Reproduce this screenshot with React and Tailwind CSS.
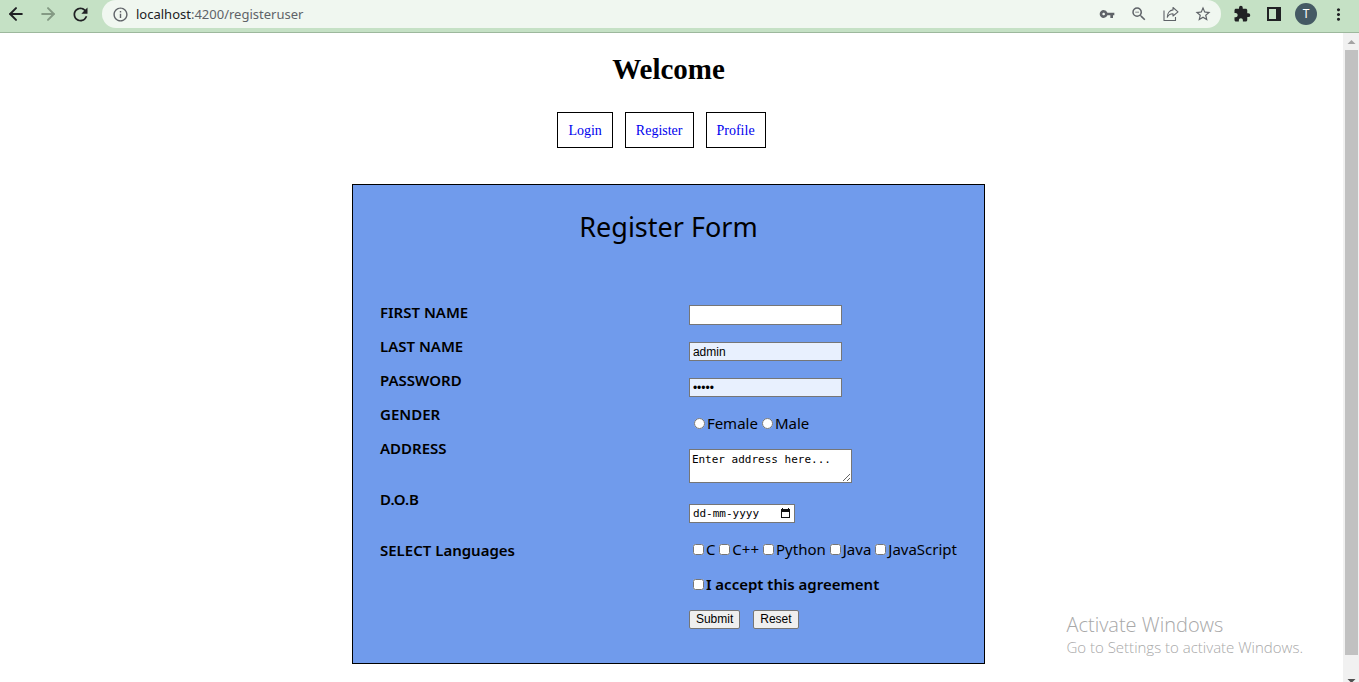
import { ArrowLeft, ArrowRight } from "lucide-react";
import { MdVpnKey, MdOutlineInfo, MdRefresh, MdStarBorder, MdExtension, MdZoomOut, MdMoreVert } from "react-icons/md";

const languages = ["C", "C++", "Python", "Java", "JavaScript"];

function ShareIcon() {
  return (
    <svg viewBox="0 0 16 16" className="size-4" fill="none" stroke="currentColor" strokeWidth="1.1" strokeLinejoin="round">
      <path d="M1 4.500v10h11.500v-3.500" />
      <path d="M10 1.500l5 4.300-5 4.200V7.800C7.200 7.800 5.300 9 4.300 11.200c0-3.800 2.200-6.900 5.700-7.300z" />
    </svg>
  );
}

function BrowserBar() {
  return (
    <header className="flex h-[33px] shrink-0 items-start border-b border-[#9db89d] bg-[#c5e1c5] pr-[11px] font-['Noto_Sans',sans-serif]">
      <div className="flex h-7 w-[102px] shrink-0 items-center gap-3 pl-1.5 text-[#202124]">
        <button aria-label="Back"><ArrowLeft size={20} strokeWidth={2.4} /></button>
        <button aria-label="Forward" className="text-[#849a84]"><ArrowRight size={20} strokeWidth={2.4} /></button>
        <button aria-label="Reload"><MdRefresh size={21} /></button>
      </div>
      <div className="flex h-7 flex-1 items-center rounded-full bg-[#f0f7f0] pr-[9px] pl-2.5 text-[#5f6368]">
        <MdOutlineInfo size={17} />
        <p className="flex-1 pt-0.5 pl-[7px] text-[13px]">
          <span className="text-[#202124]">localhost</span>:4200/registeruser
        </p>
        <div className="flex items-center gap-[15px]">
          <button aria-label="Passwords"><MdVpnKey size={16} /></button>
          <button aria-label="Zoom"><MdZoomOut size={18} /></button>
          <button aria-label="Share"><ShareIcon /></button>
          <button aria-label="Bookmark"><MdStarBorder size={18} /></button>
        </div>
      </div>
      <div className="flex h-7 shrink-0 items-center pl-3 text-[#202124]">
        <button aria-label="Extensions"><MdExtension size={18} /></button>
        <button aria-label="Side panel" className="ml-4">
          <svg viewBox="0 0 14 14" className="size-3.5"><path fill="currentColor" fillRule="evenodd" d="M0 0h14v14H0zM2 2v10h7V2z" /></svg>
        </button>
        <button aria-label="Account" className="ml-3.5 size-[22px] rounded-full bg-[#455a64] text-xs text-white">T</button>
        <button aria-label="Menu" className="ml-3"><MdMoreVert size={19} /></button>
      </div>
    </header>
  );
}

function Scrollbar() {
  return (
    <div className="flex w-4 shrink-0 flex-col items-center bg-[#f1f1f1]" aria-hidden="true">
      <svg viewBox="0 0 16 17" className="h-[17px] w-4 shrink-0"><path fill="#a3a3a3" d="M4.500 11h8L8.500 7z" /></svg>
      <div className="w-[13px] flex-1 bg-[#c1c1c1]" />
      <svg viewBox="0 0 16 27" className="h-[27px] w-4 shrink-0"><path fill="#505050" d="M4.500 24h8l-4 4z" /></svg>
    </div>
  );
}

const label = "text-[15px] leading-[17px] font-semibold";
const field = "w-[153px] border border-[#767676] px-[3px] font-['Liberation_Sans',sans-serif] text-xs leading-[17px] outline-none";
const tick = "size-[11px]";
const option = "flex items-center gap-0.5";
const action = "h-[19px] rounded-[2px] border border-[#767676] bg-[#efefef] px-1.5 font-['Liberation_Sans',sans-serif] text-xs leading-[17px]";

function RegisterForm() {
  return (
    <form
      className="mt-9 h-[480px] w-[633px] border border-black bg-[#709bec] px-[27px] pt-[22px] font-['Noto_Sans',sans-serif] text-black"
      onSubmit={(e) => e.preventDefault()}
    >
      <h2 className="text-center text-[27px] leading-10">Register Form</h2>
      <div className="mt-14 flex">
        <div className="flex w-[309px] flex-col items-start gap-[17px] pt-px">
          <label htmlFor="first" className={label}>FIRST NAME</label>
          <label htmlFor="last" className={label}>LAST NAME</label>
          <label htmlFor="pass" className={label}>PASSWORD</label>
          <span id="gender" className={label}>GENDER</span>
          <label htmlFor="address" className={label}>ADDRESS</label>
          <label htmlFor="dob" className={label + " mt-[17px]"}>D.O.B</label>
          <span id="langs" className={label + " mt-[17px]"}>SELECT Languages</span>
        </div>
        <div className="flex flex-col items-start pt-0.5">
          <input id="first" type="text" className={field + " h-5 bg-white"} />
          <input id="last" type="text" defaultValue="admin" className={field + " mt-[17px] h-[19px] bg-[#e8f0fe]"} />
          <input id="pass" type="password" defaultValue="admin" className={field + " mt-[17px] h-[19px] bg-[#e8f0fe]"} />
          <div role="radiogroup" aria-labelledby="gender" className="mt-4 flex gap-1 pl-[5px] text-[15px] leading-5">
            <label className={option}><input type="radio" name="gender" className={tick} />Female</label>
            <label className={option}><input type="radio" name="gender" className={tick} />Male</label>
          </div>
          <textarea
            id="address"
            placeholder="Enter address here..."
            className="mt-4 h-[34px] w-[163px] border border-[#767676] bg-white px-0.5 py-[3px] font-['DejaVu_Sans_Mono',monospace] text-[11px] leading-[13px] outline-none placeholder:text-black"
          />
          <div className="mt-[21px] flex h-[19px] w-[106px] items-center border border-[#767676] bg-white px-[3px]">
            <input id="dob" type="text" placeholder="dd-mm-yyyy" className="min-w-0 flex-1 font-['DejaVu_Sans_Mono',monospace] text-[11px] leading-[17px] outline-none placeholder:text-black" />
            <button type="button" aria-label="Open calendar">
              <svg viewBox="0 0 11 11" className="size-[11px]"><path fill="#111" fillRule="evenodd" d="M1 1h1V0h1v1h5V0h1v1h1v9H1zM2 4v5h7V4z" /></svg>
            </button>
          </div>
          <div role="group" aria-labelledby="langs" className="mt-4 flex gap-1 pl-1 text-[15px] leading-5">
            {languages.map((name) => (
              <label key={name} className={option}><input type="checkbox" className={tick} />{name}</label>
            ))}
          </div>
          <label className={option + " mt-[15px] pl-1 text-[15px] leading-5 font-semibold"}>
            <input type="checkbox" className={tick} />I accept this agreement
          </label>
          <div className="mt-4 flex gap-[13px]">
            <button type="submit" className={action}>Submit</button>
            <button type="reset" className={action}>Reset</button>
          </div>
        </div>
      </div>
    </form>
  );
}

export default function App() {
  const link = "border border-black px-2.5 pt-2.5 pb-2 leading-4";
  return (
    <div className="flex h-screen flex-col overflow-hidden bg-white">
      <BrowserBar />
      <div className="flex min-h-0 flex-1">
        <main className="flex flex-1 flex-col items-center overflow-hidden pt-5 pr-1.5">
          <h1 className="font-['Liberation_Serif',serif] text-[29px] leading-8 font-bold text-black">Welcome</h1>
          <nav className="mt-[27px] mr-3.5 flex gap-3 font-['Liberation_Serif',serif] text-sm text-[#0000ee]">
            <a href="#login" className={link}>Login</a>
            <a href="#register" className={link}>Register</a>
            <a href="#profile" className={link}>Profile</a>
          </nav>
          <RegisterForm />
        </main>
        <Scrollbar />
      </div>
      <aside className="pointer-events-none absolute right-14 bottom-[25px] font-['Open_Sans',sans-serif] font-light text-[#a8a8a8]">
        <p className="text-[20px] leading-6">Activate Windows</p>
        <p className="text-[15px] leading-5">Go to Settings to activate Windows.</p>
      </aside>
    </div>
  );
}
